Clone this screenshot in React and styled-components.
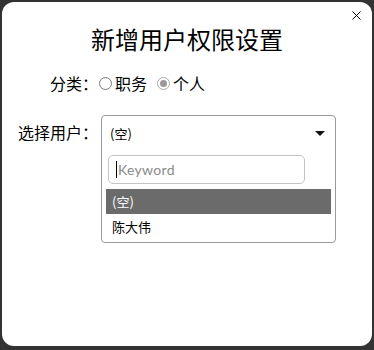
import React from "react";
import styled, { createGlobalStyle } from "styled-components";

const Global = createGlobalStyle`
  html, body { margin: 0; padding: 0; background: #333333; }
  body { font-family: "Noto Sans CJK SC", "Noto Sans", sans-serif; }
  * { box-sizing: border-box; }
`;

const Dialog = styled.div`
  position: relative;
  margin: 2px 2px 0 2px;
  width: 370px;
  height: 344px;
  background: #ffffff;
  border-radius: 12px;
  padding-top: 22px;
  color: #000;
`;

const Close = styled.button`
  position: absolute;
  top: 9px;
  right: 11px;
  width: 9px;
  height: 9px;
  padding: 0;
  border: 0;
  background: transparent;
  display: flex;
`;

const Title = styled.h1`
  margin: 0;
  font-size: 24px;
  line-height: 30px;
  font-weight: 400;
  text-align: center;
`;

const Row = styled.div`
  display: flex;
  align-items: ${(p) => (p.$top ? "flex-start" : "center")};
  padding-left: 16px;
  margin-top: ${(p) => p.$mt}px;
`;

const Label = styled.div`
  width: 80px;
  text-align: right;
  font-size: 16px;
  line-height: 20px;
  margin-top: ${(p) => p.$mt || 0}px;
`;

const Radios = styled.div`
  display: flex;
  align-items: center;
  font-size: 16px;
  line-height: 20px;
`;

const RadioItem = styled.label`
  display: flex;
  align-items: center;
  gap: 3px;
  margin-left: ${(p) => p.$ml}px;
`;

const Circle = styled.span`
  width: 13px;
  height: 13px;
  border-radius: 50%;
  border: 1px solid ${(p) => (p.$on ? "#a9a9a9" : "#7a7a7a")};
  background: #fff;
  display: flex;
  align-items: center;
  justify-content: center;
  &::after {
    content: "";
    display: ${(p) => (p.$on ? "block" : "none")};
    width: 7px;
    height: 7px;
    border-radius: 50%;
    background: #9a9a9a;
  }
`;

const Select = styled.div`
  margin-left: 3px;
  width: 235px;
  border: 1px solid #9a9a9a;
  border-radius: 4px;
  padding: 0 4px 3px 4px;
  display: flex;
  flex-direction: column;
`;

const Head = styled.div`
  height: 35px;
  display: flex;
  align-items: center;
  justify-content: space-between;
  padding: 0 6px 0 4px;
  font-size: 13px;
`;

const Caret = styled.span`
  width: 0;
  height: 0;
  border-left: 5px solid transparent;
  border-right: 5px solid transparent;
  border-top: 5px solid #111;
`;

const Search = styled.div`
  margin: 4px 0 0 2px;
  width: 197px;
  height: 29px;
  border: 1px solid #c4c4c4;
  border-radius: 5px;
  display: flex;
  align-items: center;
  padding-left: 7px;
  font-family: "Lato", "Open Sans", sans-serif;
  font-size: 14px;
  color: #8a8a8a;
  letter-spacing: 0.3px;
`;

const Cursor = styled.span`
  width: 1px;
  height: 17px;
  background: #000;
  margin-right: 1px;
`;

const Options = styled.ul`
  list-style: none;
  margin: 5px 0 0 0;
  padding: 0;
`;

const Option = styled.li`
  height: 25px;
  display: flex;
  align-items: center;
  padding-left: 6px;
  font-size: 13px;
  background: ${(p) => (p.$active ? "#6b6b6b" : "transparent")};
  color: ${(p) => (p.$active ? "#fff" : "#000")};
`;

export default function App() {
  return (
    <>
      <Global />
      <Dialog>
        <Close aria-label="close">
          <svg width="9" height="9" viewBox="0 0 9 9">
            <path d="M0.5 0.5 L8.5 8.5 M8.5 0.5 L0.5 8.5" stroke="#000" strokeWidth="1" />
          </svg>
        </Close>
        <Title>新增用户权限设置</Title>
        <Row $mt={19}>
          <Label>分类：</Label>
          <Radios>
            <RadioItem $ml={1}>
              <Circle />
              职务
            </RadioItem>
            <RadioItem $ml={10}>
              <Circle $on />
              个人
            </RadioItem>
          </Radios>
        </Row>
        <Row $top $mt={22}>
          <Label $mt={7}>选择用户：</Label>
          <Select>
            <Head>
              <span>(空)</span>
              <Caret />
            </Head>
            <Search>
              <Cursor />
              Keyword
            </Search>
            <Options>
              <Option $active>(空)</Option>
              <Option>陈大伟</Option>
            </Options>
          </Select>
        </Row>
      </Dialog>
    </>
  );
}
